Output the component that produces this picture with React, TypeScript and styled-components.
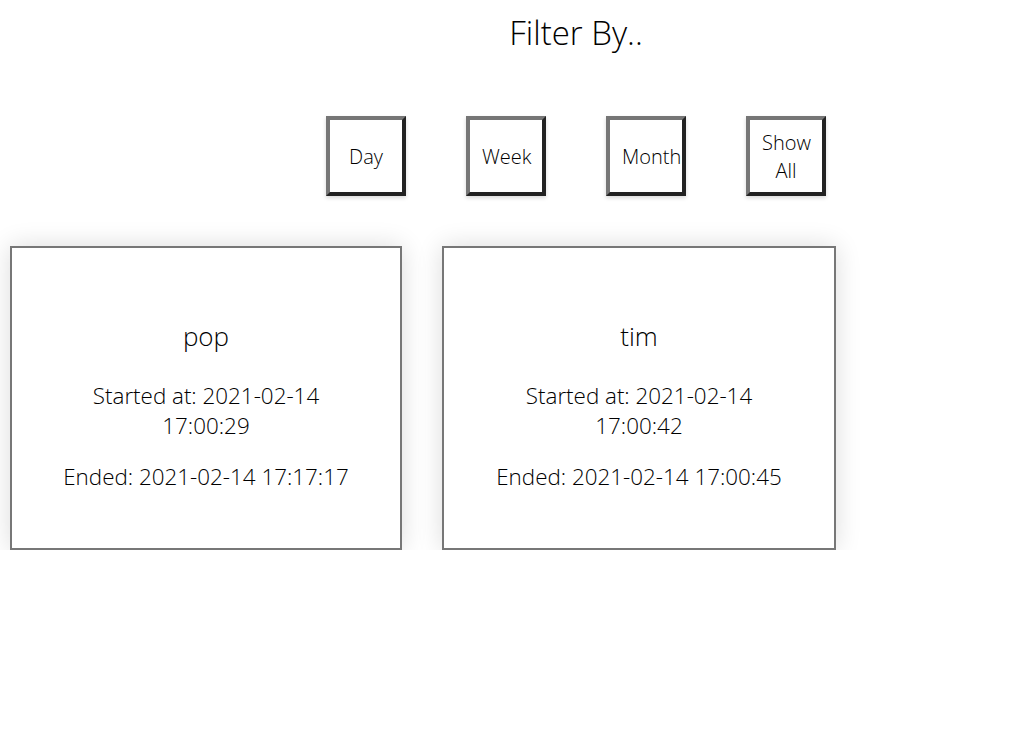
import styled, { createGlobalStyle } from 'styled-components';

const GlobalStyle = createGlobalStyle`
  body {
    margin: 0;
    background: #fff;
    font-family: "Open Sans", "Liberation Sans", sans-serif;
    font-weight: 300;
    color: #000;
  }
`;

const Page = styled.div`
  width: 1034px;
  padding-top: 12px;
`;

const Title = styled.h1`
  margin: 0 0 0 326px;
  width: 500px;
  text-align: center;
  font-size: 33px;
  font-weight: 300;
  line-height: 42px;
`;

const FilterRow = styled.div`
  display: flex;
  gap: 60px;
  margin: 62px 0 0 326px;
`;

const FilterButton = styled.button`
  box-sizing: border-box;
  width: 80px;
  height: 80px;
  padding: 2px 12px 0;
  background: #fff;
  border-style: solid;
  border-width: 4px;
  border-color: #767676 #222 #222 #767676;
  box-shadow: 0 2px 4px rgba(0, 0, 0, 0.15);
  font-family: "Open Sans", sans-serif;
  font-weight: 300;
  font-size: 20px;
  line-height: 28px;
  color: #000;
  cursor: pointer;
`;

const CardRow = styled.div`
  display: flex;
  gap: 40px;
  margin: 50px 0 0 10px;
`;

const Card = styled.div<{ $width: number }>`
  box-sizing: border-box;
  width: ${(p) => p.$width}px;
  height: 304px;
  border: 2px solid #777;
  background: #fff;
  box-shadow: 0 0 24px rgba(0, 0, 0, 0.14);
  padding: 68px 48px 0;
  text-align: center;
`;

const Name = styled.div`
  font-size: 26px;
  line-height: 40px;
  margin-bottom: 25px;
`;

const Line = styled.p`
  margin: 0 0 21px;
  font-size: 22.4px;
  line-height: 30px;
`;

const sessions = [
  { name: 'pop', start: '2021-02-14 17:00:29', end: '2021-02-14 17:17:17', width: 392 },
  { name: 'tim', start: '2021-02-14 17:00:42', end: '2021-02-14 17:00:45', width: 394 },
];

const App = () => {
  return (
    <Page>
      <GlobalStyle />
      <Title>Filter By..</Title>
      <FilterRow>
        <FilterButton>Day</FilterButton>
        <FilterButton>Week</FilterButton>
        <FilterButton>Month</FilterButton>
        <FilterButton>Show All</FilterButton>
      </FilterRow>
      <CardRow>
        {sessions.map((s) => (
          <Card key={s.name} $width={s.width}>
            <Name>{s.name}</Name>
            <Line>Started at: {s.start}</Line>
            <Line>Ended: {s.end}</Line>
          </Card>
        ))}
      </CardRow>
    </Page>
  );
};

export default App;
